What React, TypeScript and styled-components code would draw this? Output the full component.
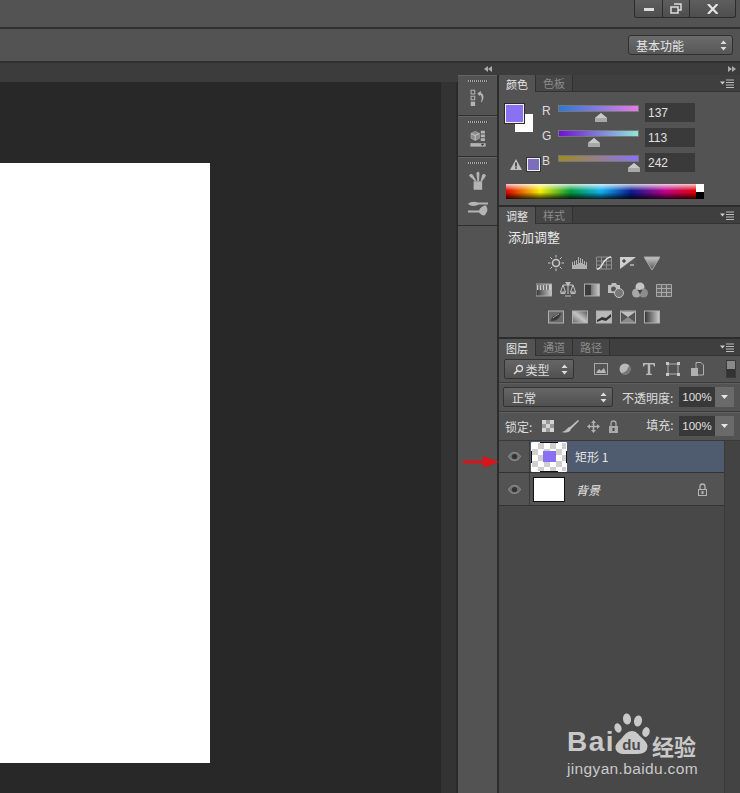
import React from 'react';
import styled, { createGlobalStyle } from 'styled-components';

const cjk = `"Noto Sans CJK SC", "Liberation Sans", sans-serif`;

const GlobalStyle = createGlobalStyle`
  html, body {
    margin: 0;
    padding: 0;
    background: #282828;
  }
  body {
    font-family: ${cjk};
    overflow: hidden;
  }
  * {
    box-sizing: border-box;
  }
`;

const Page = styled.div`
  position: relative;
  width: 740px;
  height: 793px;
  overflow: hidden;
  display: flex;
  flex-direction: column;
  background: #535353;
`;

const TitleBar = styled.div`
  height: 29px;
  flex: none;
  display: flex;
  justify-content: flex-end;
  align-items: flex-start;
  padding-right: 4px;
  background: #535353;
  border-bottom: 2px solid #303030;
`;

const WindowButtons = styled.div`
  display: flex;
  height: 18px;
  border: 1px solid #2c2c2c;
  border-top: 0;
  border-radius: 0 0 3px 3px;
  background: linear-gradient(#5e5e5e, #4e4e4e);
`;

const WindowButton = styled.div<{ $w: number }>`
  width: ${(p) => p.$w}px;
  display: flex;
  align-items: center;
  justify-content: center;
  & + & {
    border-left: 1px solid #2c2c2c;
  }
`;

const OptionsBar = styled.div`
  height: 34px;
  flex: none;
  display: flex;
  align-items: center;
  justify-content: flex-end;
  padding: 0 7px 0 0;
  background: #535353;
  border-bottom: 2px solid #303030;
`;

const Workspace = styled.div`
  width: 105px;
  height: 20px;
  display: flex;
  align-items: center;
  justify-content: space-between;
  padding: 0 5px 0 7px;
  font-size: 12px;
  color: #e4e4e4;
  border: 1px solid #303030;
  border-radius: 3px;
  background: linear-gradient(#6c6c6c, #565656);
`;

const Main = styled.div`
  flex: 1;
  display: flex;
  min-height: 0;
`;

const DocColumn = styled.div`
  width: 458px;
  flex: none;
  display: flex;
  flex-direction: column;
`;

const DocTabs = styled.div`
  height: 19px;
  flex: none;
  background: #3c3c3c;
`;

const DocBody = styled.div`
  flex: 1;
  display: flex;
  background: #282828;
`;

const Canvas = styled.div`
  flex: 1;
  padding-top: 81px;
`;

const Sheet = styled.div`
  width: 210px;
  height: 600px;
  background: #fff;
`;

const DocScroll = styled.div`
  width: 17px;
  flex: none;
  background: #333;
  border-right: 2px solid #2a2a2a;
`;

const RightColumn = styled.div`
  flex: 1;
  display: flex;
  flex-direction: column;
`;

const DockHeader = styled.div`
  height: 12px;
  flex: none;
  display: flex;
  align-items: center;
  justify-content: space-between;
  padding: 0 4px 0 26px;
  background: #3c3c3c;
`;

const DockRow = styled.div`
  flex: 1;
  display: flex;
  min-height: 0;
`;

const Dock = styled.div`
  width: 41px;
  flex: none;
  display: flex;
  flex-direction: column;
  background: #535353;
  border-right: 2px solid #2c2c2c;
`;

const DockGroup = styled.div<{ $h: number }>`
  height: ${(p) => p.$h}px;
  display: flex;
  flex-direction: column;
  align-items: center;
  gap: ${(p) => (p.$h > 50 ? 11 : 0)}px;
  padding-top: 4px;
  border-bottom: 1px solid #2e2e2e;
  border-top: 1px solid #646464;
`;

const Grip = styled.div`
  width: 20px;
  height: 2px;
  margin-bottom: -4px;
  background: repeating-linear-gradient(90deg, #aaa 0 1px, #444 1px 2px);
`;

const GripBelow = styled.div`
  height: 11px;
  flex: none;
`;

const Panels = styled.div`
  flex: 1;
  display: flex;
  flex-direction: column;
  gap: 2px;
  background: #2c2c2c;
`;

const Panel = styled.section<{ $h?: number }>`
  display: flex;
  flex-direction: column;
  flex: ${(p) => (p.$h ? `0 0 ${p.$h}px` : '1')};
  background: #535353;
  min-height: 0;
`;

const TabStrip = styled.div`
  height: 17px;
  flex: none;
  display: flex;
  align-items: stretch;
  padding-right: 5px;
  background: #3f3f3f;
  border-bottom: 1px solid #333;
`;

const Tab = styled.div<{ $active?: boolean }>`
  width: 37px;
  height: ${(p) => (p.$active ? 17 : 16)}px;
  display: flex;
  align-items: center;
  justify-content: center;
  font-size: 11px;
  color: ${(p) => (p.$active ? '#e6e6e6' : '#8c8c8c')};
  background: ${(p) => (p.$active ? '#535353' : '#464646')};
  border-right: 1px solid #303030;
`;

const MenuSlot = styled.div`
  margin-left: auto;
  display: flex;
  align-items: center;
`;

/* colour panel */
const ColorBody = styled.div`
  flex: 1;
  display: flex;
  padding: 11px 0 0 6px;
  flex-wrap: wrap;
  align-content: flex-start;
`;

const SwatchColumn = styled.div`
  width: 37px;
  height: 68px;
  display: flex;
  flex-direction: column;
  justify-content: space-between;
`;

const SwatchStack = styled.div`
  position: relative;
  width: 28px;
  height: 28px;
  margin-top: 1px;
`;

const BackSwatch = styled.div`
  position: absolute;
  left: 10px;
  top: 10px;
  width: 18px;
  height: 18px;
  background: #fff;
`;

const FrontSwatch = styled.div`
  position: absolute;
  left: 0;
  top: 0;
  width: 19px;
  height: 19px;
  background: #8971f2;
  border: 1px solid #f0f0f0;
  outline: 1px solid #2a2a2a;
`;

const GamutRow = styled.div`
  display: flex;
  align-items: center;
  gap: 5px;
  padding-left: 5px;
`;

const GamutSwatch = styled.div`
  width: 13px;
  height: 13px;
  background: #7a6fb8;
  border: 1px solid #eee;
  outline: 1px solid #333;
`;

const Sliders = styled.div`
  width: 153px;
  display: flex;
  flex-direction: column;
`;

const SliderRow = styled.div`
  height: 25px;
  display: flex;
  align-items: flex-start;
`;

const ChannelLabel = styled.div`
  width: 16px;
  margin-top: 1px;
  font: 12px 'Liberation Sans', sans-serif;
  color: #ddd;
`;

const Track = styled.div<{ $from: string; $to: string }>`
  position: relative;
  width: 81px;
  height: 7px;
  margin: 2px 6px 0 0;
  background: linear-gradient(90deg, ${(p) => p.$from}, ${(p) => p.$to});
  border: 1px solid #777;
`;

const Thumb = styled.svg`
  position: absolute;
  top: 7px;
  margin-left: -6px;
`;

const ValueBox = styled.div`
  width: 50px;
  height: 19px;
  display: flex;
  align-items: center;
  padding-left: 3px;
  font: 12px 'Liberation Sans', sans-serif;
  color: #e0e0e0;
  background: #3a3a3a;
`;

const Ramp = styled.div`
  width: 198px;
  height: 15px;
  margin: 6px 0 0 1px;
  display: flex;
`;

const Spectrum = styled.div`
  flex: 1;
  background: linear-gradient(#fff0 55%, #000c), linear-gradient(#fffc, #fff0 45%),
    linear-gradient(90deg, #e00000 0, #f7ee00 18%, #009a3a 34%, #10b0f0 50%, #0a1a90 66%, #c0008a 84%, #e00000 100%);
`;

const RampEnds = styled.div`
  width: 8px;
  background: linear-gradient(#fff 50%, #000 50%);
`;

/* adjustments */
const AdjustBody = styled.div`
  flex: 1;
  padding: 4px 41px 0 9px;
`;

const AdjustTitle = styled.div`
  font-size: 13px;
  line-height: 18px;
  color: #e8e8e8;
  margin-bottom: 3px;
`;

const IconRow = styled.div`
  display: flex;
  justify-content: center;
  gap: 8px;
  height: 27px;
  align-items: center;
`;

/* layers */
const ToolRow = styled.div<{ $h: number; $pl?: number }>`
  height: ${(p) => p.$h}px;
  flex: none;
  display: flex;
  align-items: center;
  padding: 0 6px 0 ${(p) => p.$pl ?? 4}px;
  border-bottom: 1px solid #3a3a3a;
  box-shadow: 0 1px 0 #5f5f5f;
`;

const Select = styled.div<{ $w: number }>`
  width: ${(p) => p.$w}px;
  height: 20px;
  flex: none;
  display: flex;
  align-items: center;
  justify-content: space-between;
  padding: 0 5px 0 8px;
  font-size: 12px;
  color: #e0e0e0;
  border: 1px solid #333;
  border-radius: 2px;
  background: linear-gradient(#666, #505050);
`;

const FilterIcons = styled.div`
  display: flex;
  gap: 10px;
  margin-left: 20px;
  align-items: center;
`;

const ToggleKnob = styled.div`
  width: 10px;
  height: 18px;
  margin-left: auto;
  margin-right: -2px;
  background: linear-gradient(#8a8a8a 50%, #333 50%);
  border: 1px solid #3a3a3a;
`;

const FieldLabel = styled.div<{ $ml: number }>`
  margin-left: ${(p) => p.$ml}px;
  font-size: 12px;
  color: #dcdcdc;
  white-space: nowrap;
`;

const Percent = styled.div`
  margin-left: auto;
  display: flex;
  height: 20px;
`;

const PercentValue = styled.div`
  width: 36px;
  display: flex;
  align-items: center;
  justify-content: center;
  font: 11.5px 'Liberation Sans', sans-serif;
  color: #e0e0e0;
  background: #383838;
`;

const PercentButton = styled.div`
  width: 19px;
  display: flex;
  align-items: center;
  justify-content: center;
  background: #6a6a6a;
`;

const LockIcons = styled.div`
  display: flex;
  align-items: center;
  gap: 8px;
  margin-left: 10px;
`;

const LayerArea = styled.div`
  flex: 1;
  display: flex;
  min-height: 0;
`;

const LayerList = styled.div`
  width: 225px;
  flex: none;
  background: #484848;
`;

const LayerScroll = styled.div`
  flex: 1;
  background: #434343;
  border-left: 1px solid #3a3a3a;
`;

const LayerRow = styled.div<{ $h: number }>`
  height: ${(p) => p.$h}px;
  display: flex;
  background: #535353;
  border-bottom: 1px solid #333;
`;

const EyeCell = styled.div`
  width: 31px;
  flex: none;
  display: flex;
  align-items: center;
  justify-content: center;
  border-right: 1px solid #3a3a3a;
`;

const LayerMain = styled.div<{ $selected?: boolean }>`
  flex: 1;
  display: flex;
  align-items: center;
  padding-right: 16px;
  background: ${(p) => (p.$selected ? '#4f5b6e' : 'transparent')};
`;

const SmartThumb = styled.div`
  position: relative;
  width: 36px;
  height: 30px;
  margin-left: 1px;
  flex: none;
  display: flex;
  align-items: center;
  justify-content: center;
  border: 1px solid #111;
  background: repeating-conic-gradient(#cfcfcf 0 25%, #fff 0 50%) 0 0 / 12px 12px;
`;

const ThumbCorners = styled.svg`
  position: absolute;
  left: -1px;
  top: -1px;
`;

const ThumbShape = styled.div`
  width: 13px;
  height: 11px;
  background: #8971f2;
`;

const PlainThumb = styled.div`
  width: 32px;
  height: 25px;
  margin-left: 3px;
  flex: none;
  background: #fff;
  border: 1px solid #111;
`;

const LayerName = styled.div<{ $italic?: boolean; $ml: number }>`
  margin-left: ${(p) => p.$ml}px;
  font-size: 12px;
  font-style: ${(p) => (p.$italic ? 'italic' : 'normal')};
  color: #e4e4e4;
`;

const LockSlot = styled.div`
  margin-left: auto;
  display: flex;
`;

/* overlays */
const RedArrow = styled.svg`
  position: absolute;
  left: 463px;
  top: 455px;
`;

const Watermark = styled.div`
  position: absolute;
  left: 567px;
  top: 712px;
  width: 134px;
  color: #c9c9c9;
`;

const LogoLine = styled.div`
  display: flex;
  align-items: flex-end;
  height: 45px;
`;

const LogoBai = styled.span`
  font: bold 28px/28px 'Liberation Sans', sans-serif;
  letter-spacing: 1.5px;
  margin-bottom: 1px;
`;

const Paw = styled.svg`
  flex: none;
  margin-left: -1px;
`;

const LogoCn = styled.span`
  font-weight: 700;
  font-size: 22px;
  line-height: 24px;
  margin-left: 2px;
  margin-bottom: 0;
`;

const LogoUrl = styled.div`
  margin-top: 3px;
  font: 15.5px/18px 'Liberation Sans', sans-serif;
  letter-spacing: 0.35px;
  white-space: nowrap;
`;

const G = '#b4b4b4';

const UpDown = () => (
  <svg width="7" height="11" viewBox="0 0 7 11">
    <path d="M3.5 0.5 L6.5 4 H0.5 Z M3.5 10.5 L6.5 7 H0.5 Z" fill="#ddd" />
  </svg>
);

const PanelMenu = () => (
  <svg width="15" height="9" viewBox="0 0 15 9">
    <path d="M0 2.5h5L2.5 5.5z" fill="#ccc" />
    <path d="M6 1h8M6 3.5h8M6 6h8M6 8.5h8" stroke="#bbb" strokeWidth="1" />
  </svg>
);

const SmallDown = () => (
  <svg width="7" height="4" viewBox="0 0 7 4">
    <path d="M0 0h7L3.5 4z" fill="#e6e6e6" />
  </svg>
);

const Eye = () => (
  <svg width="13" height="9" viewBox="0 0 15 10">
    <path d="M0.5 5C3 1 5 0.5 7.5 0.5S12 1 14.5 5C12 9 10 9.5 7.5 9.5S3 9 0.5 5Z" fill="#6e6e6e" stroke="#a0a0a0" />
    <circle cx="7.5" cy="5" r="3" fill="#333" />
  </svg>
);

const Lock = ({ c = '#aaa', hollow = false }: { c?: string; hollow?: boolean }) => (
  <svg width="11" height="13" viewBox="0 0 11 13">
    <path d="M3 6V3.5a2.5 2.5 0 0 1 5 0V6" fill="none" stroke={c} strokeWidth="1.3" />
    <rect x="1.5" y="6.5" width="8" height="6" fill={hollow ? '#555' : c} stroke={c} />
    <rect x="4.5" y="8" width="2" height="3" fill={hollow ? c : '#444'} />
  </svg>
);

// dock icons
const HistoryIcon = () => (
  <svg width="16" height="18" viewBox="0 0 22 24">
    <path d="M1.5 1.5h5v5h-5zM1.5 9.500h5v5h-5z" fill="none" stroke={G} strokeWidth="1.400" />
    <rect x="1" y="17" width="6" height="6" fill={G} />
    <path d="M10 6l5-4v3c4 1 5 7 1 13l-1-.5c2-5 1-9-1-10v2z" fill={G} />
  </svg>
);

const PropsIcon = () => (
  <svg width="16" height="18" viewBox="0 0 22 26">
    <path d="M1 5l6-3 6 3v7l-6 3-6-3z" fill="#8c8c8c" stroke={G} />
    <path d="M1 5l6 3 6-3M7 8v7" fill="none" stroke="#ddd" />
    <path d="M15 1h6v4h-6zM15 6.500h6v4h-6zM15 12h6v4h-6z" fill={G} />
    <rect x="0" y="19" width="22" height="5" fill={G} />
    <path d="M15 20h5l-2.500 3z" fill="#333" />
  </svg>
);

const BrushPotIcon = () => (
  <svg width="17" height="19" viewBox="0 0 22 24">
    <rect x="6" y="13" width="11" height="11" fill={G} />
    <path d="M8 13L0 6c1-3 4-3 5-1l5 8zM11 13L9.500 3c1-3 4-3 4 0L13 13zM15 13l2-8c1-2 4-2 5 1l-5 7z" fill={G} />
  </svg>
);

const BrushIcon = () => (
  <svg width="20" height="15" viewBox="0 0 20 15">
    <path d="M0 3c2-2 6-3 10-1.500h10v2H11C7 5.500 3 5.500 0 3z" fill={G} />
    <path d="M0 9.500h11v2H0zM11 9.500c1-3 4-5 7-5 1 2 2 4 1 6-1 2-2 4-3 4-2 0-4-2-5-3z" fill={G} />
  </svg>
);

// adjustment icons, all on a 16x16 box
const Box = ({ children }: { children: React.ReactNode }) => (
  <svg width="16" height="16" viewBox="0 0 16 16">
    <defs>
      <linearGradient id="gr" x1="0" x2="1" y1="0" y2="0">
        <stop offset="0" stopColor="#333" />
        <stop offset="1" stopColor="#ccc" />
      </linearGradient>
      <linearGradient id="gd" x1="0" x2="1" y1="1" y2="0">
        <stop offset="0" stopColor="#666" />
        <stop offset=".5" stopColor="#c4c4c4" />
        <stop offset="1" stopColor="#555" />
      </linearGradient>
      <linearGradient id="gv" x1="0" x2="0" y1="0" y2="1">
        <stop offset="0" stopColor="#c8c8c8" />
        <stop offset="1" stopColor="#505050" />
      </linearGradient>
    </defs>
    {children}
  </svg>
);

const adjustRows: React.ReactNode[][] = [
  [
    <g key="sun">
      <circle cx="8" cy="8" r="3.500" fill="#555" stroke="#c8c8c8" strokeWidth="1.500" />
      <path d="M8 0v2.500M8 13.500V16M0 8h2.500M13.500 8H16M2.300 2.300l1.800 1.800M11.900 11.900l1.800 1.800M2.300 13.700l1.800-1.800M11.900 4.100l1.800-1.800" stroke="#c8c8c8" />
    </g>,
    <path key="lev" d="M0 14V7h1v3h1V6h1v4h1V5h1v4h1V2h1v6h1V3h1v5h1V4h1v5h1V6h1v4h1V7h1v7z" fill="#b0b0b0" />,
    <g key="curves">
      <path d="M.5 2h15v12H.5zM5.500 2v12M10.500 2v12M.5 6h15M.5 10h15" fill="none" stroke="#8f8f8f" />
      <path d="M1 14c6 0 5-11 14-12" fill="none" stroke="#e4e4e4" strokeWidth="1.300" />
    </g>,
    <g key="expo">
      <rect x="0" y="2" width="16" height="12" fill="#cfcfcf" />
      <path d="M0 14L16 2v12z" fill="#555" />
      <path d="M2 6h4M4 4v4" stroke="#222" />
      <path d="M10 10h4" stroke="#eee" />
    </g>,
    <path key="vib" d="M0 2h16L8 15z" fill="url(#gv)" stroke="#a8a8a8" />,
  ],
  [
    <g key="hue">
      <rect x="0" y="2" width="16" height="12" fill="url(#gr)" stroke="#aaa" />
      <path d="M1 3h14v5H1z" fill="#ccc" />
      <path d="M3 3v5M6 3v5M9 3v5M12 3v5" stroke="#444" strokeWidth="1.200" />
    </g>,
    <g key="bal">
      <path d="M8 0v12M3 3h10M3 3L0.500 10h5zM13 3l-2.500 7h5zM5 14h6" fill="none" stroke="#c0c0c0" />
      <path d="M5 0h6L8 4z M0 10.500h6c0 2-6 2-6 0zM10 10.500h6c0 2-6 2-6 0z" fill="#c0c0c0" />
    </g>,
    <g key="bw">
      <rect x="0.500" y="2" width="15" height="12" fill="url(#gr)" stroke="#aaa" />
      <rect x="1" y="3" width="6" height="10" fill="#3c3c3c" />
    </g>,
    <g key="photo">
      <path d="M0 3h3l1-2h4l1 2h3v8H0z" fill="#bdbdbd" />
      <circle cx="5.500" cy="7" r="2.500" fill="#555" />
      <circle cx="11" cy="11" r="4.500" fill="#777" stroke="#c4c4c4" />
    </g>,
    <g key="mix">
      <circle cx="8" cy="5" r="4.500" fill="#c4c4c4" />
      <circle cx="4.500" cy="11" r="4.500" fill="#a8a8a8" />
      <circle cx="11.500" cy="11" r="4.500" fill="#8c8c8c" />
      <path d="M5.500 8L8 12l2.500-4z" fill="#444" />
    </g>,
    <path key="lut" d="M.5 2.500h15v12H.5zM5.500 2.500v12M10.500 2.500v12M.5 6.500h15M.5 10.500h15" fill="#666" stroke="#a8a8a8" />,
  ],
  [
    <g key="inv">
      <rect x="0.500" y="2" width="15" height="12" fill="#6a6a6a" stroke="#b0b0b0" />
      <path d="M3 12c0-4 4-7 10-8-1 5-4 8-10 8z" fill="#3a3a3a" />
      <path d="M5 9c2-2 4-3 6-4" stroke="#aaa" />
    </g>,
    <g key="post">
      <rect x="0.500" y="2" width="15" height="12" fill="url(#gd)" stroke="#b0b0b0" />
    </g>,
    <g key="thr">
      <rect x="0.500" y="2" width="15" height="12" fill="#b8b8b8" stroke="#b0b0b0" />
      <path d="M1 11l5-3 4 1 5-4v3l-5 4-4-1-5 2z" fill="#333" />
    </g>,
    <g key="sel">
      <rect x="0.500" y="2" width="15" height="12" fill="#8a8a8a" stroke="#b0b0b0" />
      <path d="M1 3l7 5-7 5zM15 3L8 8l7 5z" fill="#555" />
      <path d="M1 3h14L8 8z" fill="#c0c0c0" />
    </g>,
    <g key="grad">
      <rect x="0.500" y="2" width="15" height="12" fill="url(#gr)" stroke="#b0b0b0" />
    </g>,
  ],
];

const filterIcons = [
  <svg key="img" width="14" height="12" viewBox="0 0 14 12">
    <rect x=".5" y=".5" width="13" height="11" fill="#555" stroke="#aaa" />
    <path d="M2 10l3-4 2 2 3-3 2 5z" fill="#b8b8b8" />
  </svg>,
  <svg key="adj" width="14" height="14" viewBox="0 0 14 14">
    <circle cx="7" cy="7" r="5.500" fill="#b8b8b8" />
    <path d="M11 3a5.500 5.500 0 0 1-8 8c4 0 7-3 8-8z" fill="#777" />
  </svg>,
  <svg key="txt" width="14" height="14" viewBox="0 0 14 14">
    <path d="M1 1h12v3.500h-1L11 2.500H8.200v9l1.800.5v1H4v-1l1.800-.5v-9H3L2 4.500H1z" fill="#b8b8b8" />
  </svg>,
  <svg key="shape" width="14" height="14" viewBox="0 0 14 14">
    <rect x="2" y="2" width="10" height="10" fill="none" stroke="#b0b0b0" />
    <path d="M0 0h3v3H0zM11 0h3v3h-3zM0 11h3v3H0zM11 11h3v3h-3z" fill="#c8c8c8" />
  </svg>,
  <svg key="smart" width="14" height="14" viewBox="0 0 14 14">
    <path d="M6 .5h5l2.500 2.500v10H6z" fill="none" stroke="#b0b0b0" />
    <rect x="1" y="6" width="7" height="8" fill="#b0b0b0" />
  </svg>,
];

const lockIcons = [
  <svg key="px" width="12" height="12" viewBox="0 0 12 12">
    <rect width="12" height="12" fill="#999" />
    <path d="M0 0h4v4H0zM8 0h4v4H8zM4 4h4v4H4zM0 8h4v4H0zM8 8h4v4H8z" fill="#d4d4d4" />
  </svg>,
  <svg key="brush" width="17" height="13" viewBox="0 0 17 13">
    <path d="M16 0L8 7l1 2 8-8zM8 7c-2 0-3 2-4 3-1 1-2 1-4 2 3 1 8 1 9-3z" fill="#c0c0c0" />
  </svg>,
  <svg key="move" width="13" height="13" viewBox="0 0 13 13">
    <path d="M6.500 0L9 3H7.300v2.700H10V4l3 2.500L10 9V7.300H7.300V10H9l-2.500 3L4 10h1.700V7.300H3V9L0 6.500 3 4v1.700h2.700V3H4z" fill="#b0b0b0" />
  </svg>,
];

const channels = [
  { label: 'R', value: 137, from: '#2a78d8', to: '#e87ae8' },
  { label: 'G', value: 113, from: '#7010d8', to: '#90e8d8' },
  { label: 'B', value: 242, from: '#a08a20', to: '#8a72fa' },
];

const App: React.FC = () => (
  <Page>
    <GlobalStyle />
    <TitleBar>
      <WindowButtons>
        <WindowButton $w={27}>
          <svg width="10" height="4" viewBox="0 0 10 4">
            <rect width="10" height="3" y="1" fill="#ddd" />
          </svg>
        </WindowButton>
        <WindowButton $w={27}>
          <svg width="12" height="11" viewBox="0 0 12 11">
            <path d="M4 1h7v6H8M1 4h7v6H1z" fill="none" stroke="#ddd" strokeWidth="1.500" />
          </svg>
        </WindowButton>
        <WindowButton $w={46}>
          <svg width="11" height="10" viewBox="0 0 11 10">
            <path d="M1 0l9.500 10M10.500 0L1 10" stroke="#e4e4e4" strokeWidth="2.200" />
          </svg>
        </WindowButton>
      </WindowButtons>
    </TitleBar>
    <OptionsBar>
      <Workspace>
        基本功能
        <UpDown />
      </Workspace>
    </OptionsBar>
    <Main>
      <DocColumn>
        <DocTabs />
        <DocBody>
          <Canvas>
            <Sheet />
          </Canvas>
          <DocScroll />
        </DocBody>
      </DocColumn>
      <RightColumn>
        <DockHeader>
          <svg width="8" height="6" viewBox="0 0 8 6">
            <path d="M4 0v6L0 3zM8 0v6L4 3z" fill="#aaa" />
          </svg>
          <svg width="8" height="6" viewBox="0 0 8 6">
            <path d="M0 0v6l4-3zM4 0v6l4-3z" fill="#aaa" />
          </svg>
        </DockHeader>
        <DockRow>
          <Dock>
            <DockGroup $h={41}>
              <Grip />
              <GripBelow />
              <HistoryIcon />
            </DockGroup>
            <DockGroup $h={41}>
              <Grip />
              <GripBelow />
              <PropsIcon />
            </DockGroup>
            <DockGroup $h={69}>
              <Grip />
              <BrushPotIcon />
              <BrushIcon />
            </DockGroup>
          </Dock>
          <Panels>
            <Panel $h={130}>
              <TabStrip>
                <Tab $active>颜色</Tab>
                <Tab>色板</Tab>
                <MenuSlot>
                  <PanelMenu />
                </MenuSlot>
              </TabStrip>
              <ColorBody>
                <SwatchColumn>
                  <SwatchStack>
                    <BackSwatch />
                    <FrontSwatch />
                  </SwatchStack>
                  <GamutRow>
                    <svg width="12" height="11" viewBox="0 0 12 11">
                      <path d="M6 0l6 11H0z" fill="#c0c0c0" />
                      <path d="M5.300 3.500h1.400v4H5.300zM5.300 8.300h1.400v1.500H5.300z" fill="#222" />
                    </svg>
                    <GamutSwatch />
                  </GamutRow>
                </SwatchColumn>
                <Sliders>
                  {channels.map((c) => (
                    <SliderRow key={c.label}>
                      <ChannelLabel>{c.label}</ChannelLabel>
                      <Track $from={c.from} $to={c.to}>
                        <Thumb width="12" height="9" viewBox="0 0 12 9" style={{ left: `${(c.value / 255) * 100}%` }}>
                          <path d="M6 0l6 5v4H0V5z" fill="#a8a8a8" />
                          <path d="M6 0l6 5H0z" fill="#c8c8c8" />
                        </Thumb>
                      </Track>
                      <ValueBox>{c.value}</ValueBox>
                    </SliderRow>
                  ))}
                </Sliders>
                <Ramp>
                  <Spectrum />
                  <RampEnds />
                </Ramp>
              </ColorBody>
            </Panel>
            <Panel $h={130}>
              <TabStrip>
                <Tab $active>调整</Tab>
                <Tab>样式</Tab>
                <MenuSlot>
                  <PanelMenu />
                </MenuSlot>
              </TabStrip>
              <AdjustBody>
                <AdjustTitle>添加调整</AdjustTitle>
                {adjustRows.map((row, i) => (
                  <IconRow key={i}>
                    {row.map((icon, j) => (
                      <Box key={j}>{icon}</Box>
                    ))}
                  </IconRow>
                ))}
              </AdjustBody>
            </Panel>
            <Panel>
              <TabStrip>
                <Tab $active>图层</Tab>
                <Tab>通道</Tab>
                <Tab>路径</Tab>
                <MenuSlot>
                  <PanelMenu />
                </MenuSlot>
              </TabStrip>
              <ToolRow $h={27} $pl={5}>
                <Select $w={70}>
                  <svg width="11" height="11" viewBox="0 0 11 11">
                    <circle cx="6.500" cy="4.500" r="3" fill="none" stroke="#ddd" strokeWidth="1.300" />
                    <path d="M4 7L1 10" stroke="#ddd" strokeWidth="1.600" />
                  </svg>
                  <FieldLabel $ml={-10}>类型</FieldLabel>
                  <UpDown />
                </Select>
                <FilterIcons>{filterIcons}</FilterIcons>
                <ToggleKnob />
              </ToolRow>
              <ToolRow $h={29}>
                <Select $w={110}>
                  正常
                  <UpDown />
                </Select>
                <FieldLabel $ml={9}>不透明度:</FieldLabel>
                <Percent>
                  <PercentValue>100%</PercentValue>
                  <PercentButton>
                    <SmallDown />
                  </PercentButton>
                </Percent>
              </ToolRow>
              <ToolRow $h={29}>
                <FieldLabel $ml={2}>锁定:</FieldLabel>
                <LockIcons>
                  {lockIcons}
                  <Lock />
                </LockIcons>
                <Percent>
                  <FieldLabel $ml={0}>填充:&nbsp;&nbsp;</FieldLabel>
                  <PercentValue>100%</PercentValue>
                  <PercentButton>
                    <SmallDown />
                  </PercentButton>
                </Percent>
              </ToolRow>
              <LayerArea>
                <LayerList>
                  <LayerRow $h={32}>
                    <EyeCell>
                      <Eye />
                    </EyeCell>
                    <LayerMain $selected>
                      <SmartThumb>
                        <ThumbShape />
                        <ThumbCorners width="36" height="30" viewBox="0 0 36 30">
                          <path d="M.5 9V.5H9M27 .5h8.500V9M.5 21v8.500H9M27 29.500h8.500V21" fill="none" stroke="#fff" />
                        </ThumbCorners>
                      </SmartThumb>
                      <LayerName $ml={8}>矩形 1</LayerName>
                    </LayerMain>
                  </LayerRow>
                  <LayerRow $h={33}>
                    <EyeCell>
                      <Eye />
                    </EyeCell>
                    <LayerMain>
                      <PlainThumb />
                      <LayerName $italic $ml={11}>
                        背景
                      </LayerName>
                      <LockSlot>
                        <Lock c="#b4b4b4" hollow />
                      </LockSlot>
                    </LayerMain>
                  </LayerRow>
                </LayerList>
                <LayerScroll />
              </LayerArea>
            </Panel>
          </Panels>
        </DockRow>
      </RightColumn>
    </Main>
    <RedArrow width="36" height="14" viewBox="0 0 36 14">
      <path d="M0 5.500h20V1l16 6-16 6V8.500H0z" fill="#d8141c" />
    </RedArrow>
    <Watermark>
      <LogoLine>
        <LogoBai>Bai</LogoBai>
        <Paw width="36" height="45" viewBox="0 0 36 45">
          <ellipse cx="4" cy="16" rx="3.400" ry="4.800" transform="rotate(-20 4 16)" fill="#c9c9c9" />
          <ellipse cx="13" cy="7" rx="4" ry="5.500" transform="rotate(-8 13 7)" fill="#c9c9c9" />
          <ellipse cx="24" cy="9" rx="4" ry="5.500" transform="rotate(12 24 9)" fill="#c9c9c9" />
          <ellipse cx="32" cy="20" rx="3.600" ry="5" transform="rotate(15 32 20)" fill="#c9c9c9" />
          <path d="M18 19c4 0 6 3 9 6 4 4 8 7 6 12-2 5-7 5-15 5S5 43 2 38c-2-5 2-8 6-12 3-4 6-7 10-7z" fill="#c9c9c9" />
          <text x="17.500" y="38" textAnchor="middle" fontFamily="Liberation Sans" fontWeight="700" fontSize="15" fill="#4a4a4a">
            du
          </text>
        </Paw>
        <LogoCn>经验</LogoCn>
      </LogoLine>
      <LogoUrl>jingyan.baidu.com</LogoUrl>
    </Watermark>
  </Page>
);

export default App;
